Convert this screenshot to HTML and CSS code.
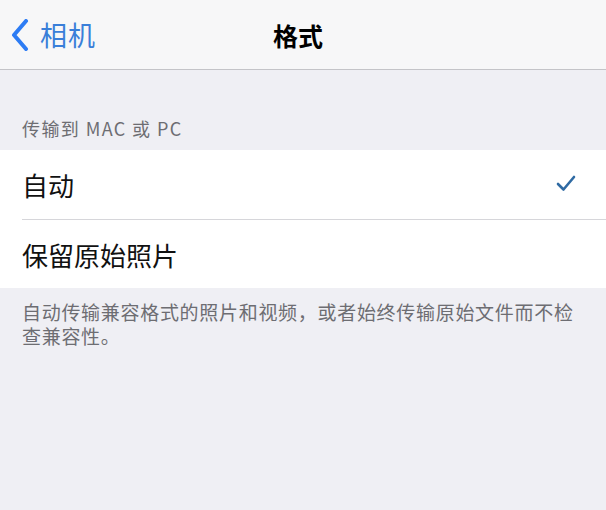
FILE: index.html
```html
<!DOCTYPE html>
<html lang="zh-CN">
  <head>
    <meta charset="UTF-8" />
    <title>格式</title>
    <link rel="stylesheet" href="styles.css">
  </head>
  <body>
    <div class="navbar">
      <div class="back">
        <svg class="chevron" width="18" height="32" viewBox="0 0 18 32">
          <polyline points="15,2 3,16 15,30" fill="none" stroke="#2d7cf4" stroke-width="4" stroke-linecap="round" stroke-linejoin="round" />
        </svg>
        <span>相机</span>
      </div>
      <div class="title">格式</div>
      <div class="spacer"></div>
    </div>

    <div class="group-header">传输到 MAC 或 PC</div>

    <div class="group">
      <div class="row">
        <span>自动</span>
        <svg class="check" width="20" height="17" viewBox="0 0 20 17">
          <polyline points="2,9 7.5,14.5 18,2" fill="none" stroke="#2f6aa3" stroke-width="2.6" stroke-linecap="round" stroke-linejoin="round" />
        </svg>
      </div>
      <div class="row">
        <span>保留原始照片</span>
      </div>
    </div>

    <div class="group-footer">自动传输兼容格式的照片和视频，或者始终传输原始文件而不检查兼容性。</div>
  </body>
</html>
```

FILE: styles.css
```css
body {
  margin: 0;
  background-color: #efeff4;
  font-family: "Noto Sans CJK SC", "Noto Sans", sans-serif;
  color: #111;
}
.navbar {
  height: 69px;
  background-color: #f7f7f8;
  border-bottom: 1px solid #c4c4c8;
  display: grid;
  grid-template-columns: 1fr auto 1fr;
  align-items: center;
}
.back {
  display: flex;
  align-items: center;
  padding-left: 11px;
  color: #3a7fd9;
  font-size: 27px;
  letter-spacing: 1px;
}
.chevron {
  margin-right: 11px;
}
.title {
  font-size: 25px;
  font-weight: 600;
  color: #000;
  margin-right: 10px;
}
.group-header {
  padding: 47px 22px 11px;
  font-size: 18px;
  line-height: 22px;
  letter-spacing: 1.4px;
  color: #6d6d72;
}
.group {
  background-color: #ffffff;
}
.row {
  height: 69px;
  display: flex;
  align-items: center;
  justify-content: space-between;
  padding: 0 30px 0 22px;
  font-size: 26px;
}
.row + .row {
  border-top: 1px solid #d6d6da;
  margin-left: 22px;
  padding-left: 0;
  height: 68px;
}
.check {
  margin-top: -3px;
}
.group-footer {
  padding: 12px 30px 0 22px;
  font-size: 19px;
  line-height: 24px;
  letter-spacing: 0.7px;
  color: #6d6d72;
}
```
